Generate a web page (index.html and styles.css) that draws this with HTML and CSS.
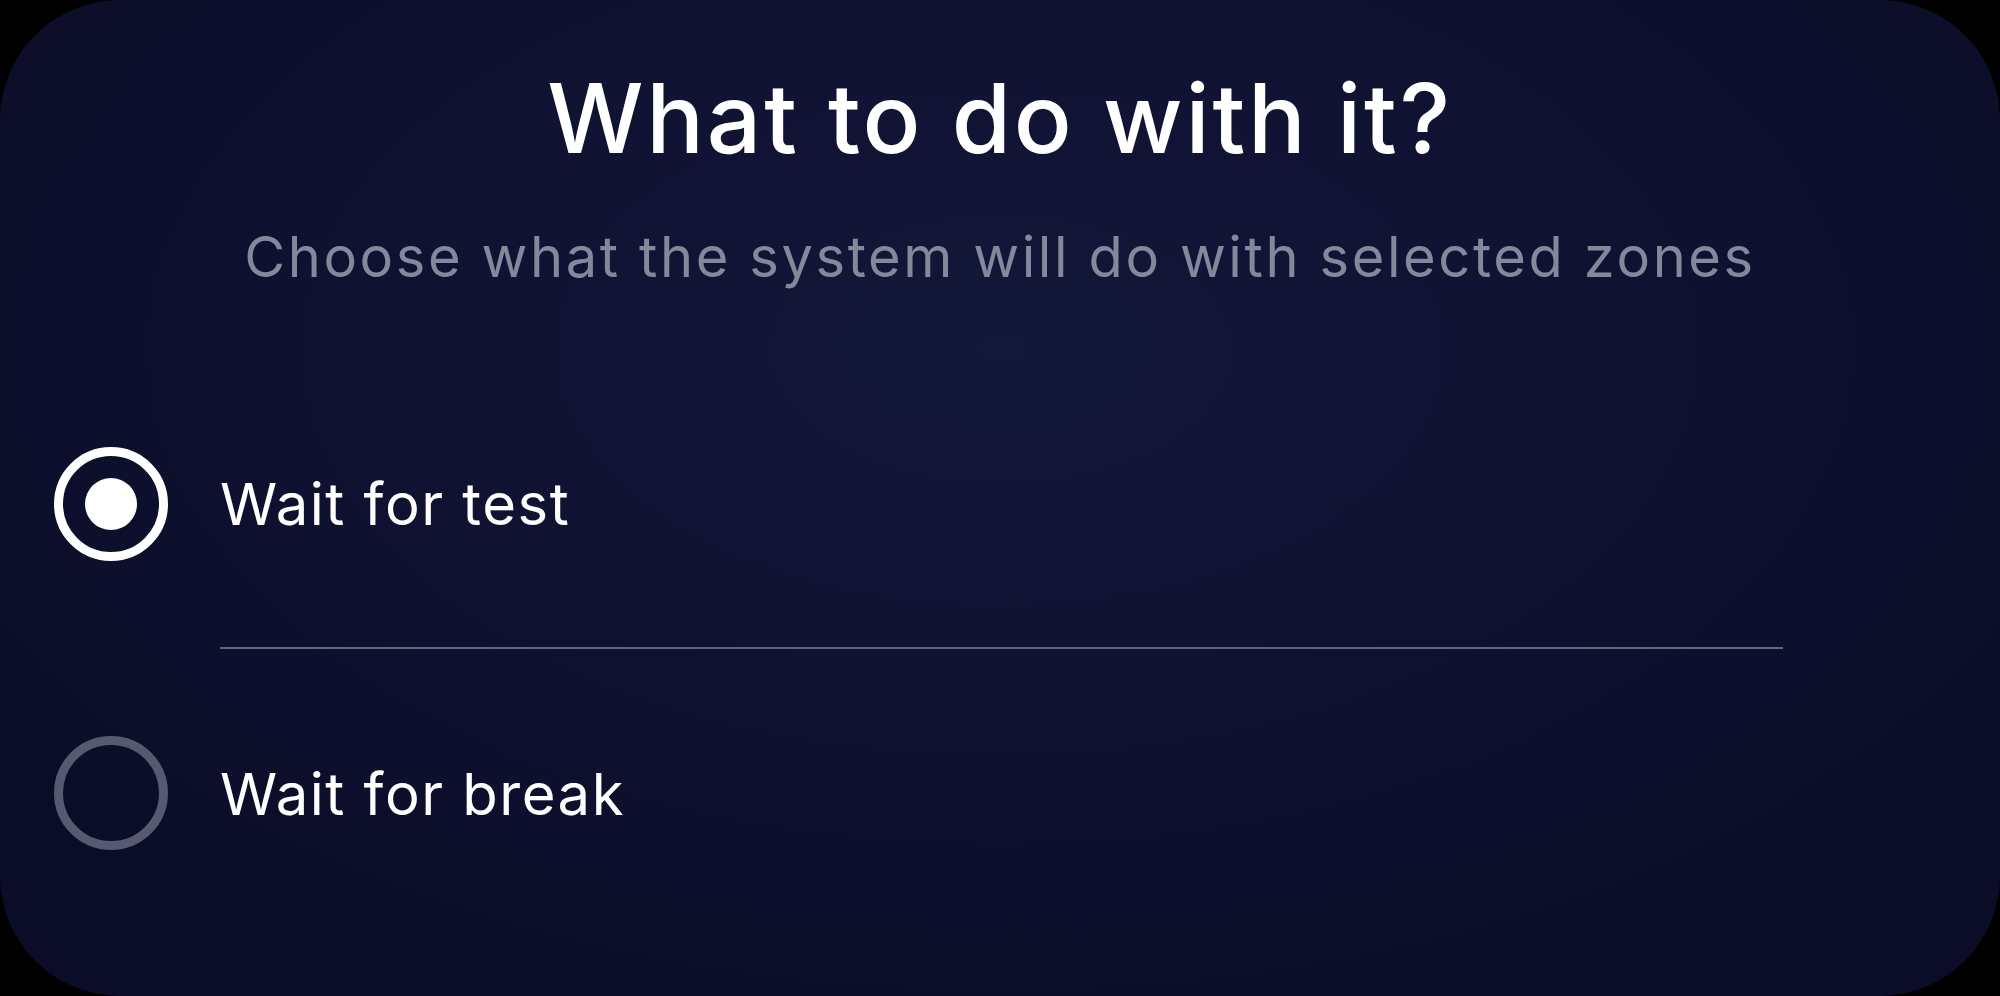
FILE: index.html
```html
<!DOCTYPE html>
<html lang="en">
<head>
<meta charset="utf-8">
<title>What to do with it?</title>
<link rel="stylesheet" href="styles.css">
</head>
<body>
<div class="card">
  <h1 class="title">What to do with it?</h1>
  <p class="subtitle">Choose what the system will do with selected zones</p>
  <div class="options">
    <div class="option">
      <span class="radio radio-on"><span class="dot"></span></span>
      <span class="label">Wait for test</span>
    </div>
    <div class="option">
      <span class="radio radio-off"></span>
      <span class="label label-divided">Wait for break</span>
    </div>
  </div>
</div>
</body>
</html>
```

FILE: styles.css
```css
html, body {
  margin: 0;
  padding: 0;
  background: #000;
}
body {
  width: 2000px;
  height: 996px;
  overflow: hidden;
  font-family: "Inter", "Noto Sans", sans-serif;
}
.card {
  box-sizing: border-box;
  width: 2000px;
  height: 996px;
  border-radius: 120px;
  background:
    radial-gradient(ellipse 60% 70% at 50% 35%, #131739 0%, #0f1231 50%, #0b0d28 100%);
  display: flex;
  flex-direction: column;
  align-items: center;
  color: #fff;
}
.title {
  margin: 58px 0 0 0;
  font-size: 96px;
  font-weight: 500;
  line-height: 120px;
  letter-spacing: 2.8px;
}
.subtitle {
  margin: 44px 0 0 0;
  font-size: 56px;
  font-weight: 400;
  line-height: 70px;
  color: #86879b;
  letter-spacing: 2.6px;
}
.options {
  align-self: stretch;
  display: flex;
  flex-direction: column;
  padding: 0 217px 0 54px;
  margin-top: 69px;
}
.option {
  display: flex;
  align-items: stretch;
  height: 286px;
}
.option + .option {
  height: 292px;
}
.radio {
  box-sizing: border-box;
  flex: none;
  width: 114px;
  height: 114px;
  border-radius: 50%;
  border: 9px solid #fff;
  align-self: center;
  display: flex;
  align-items: center;
  justify-content: center;
}
.radio-off {
  border-color: #575970;
}
.dot {
  width: 52px;
  height: 52px;
  border-radius: 50%;
  background: #fff;
}
.label {
  flex: 1;
  margin-left: 52px;
  display: flex;
  align-items: center;
  font-size: 58px;
  font-weight: 400;
  letter-spacing: 1.5px;
}
.label-divided {
  border-top: 2px solid #63657d;
}
```
